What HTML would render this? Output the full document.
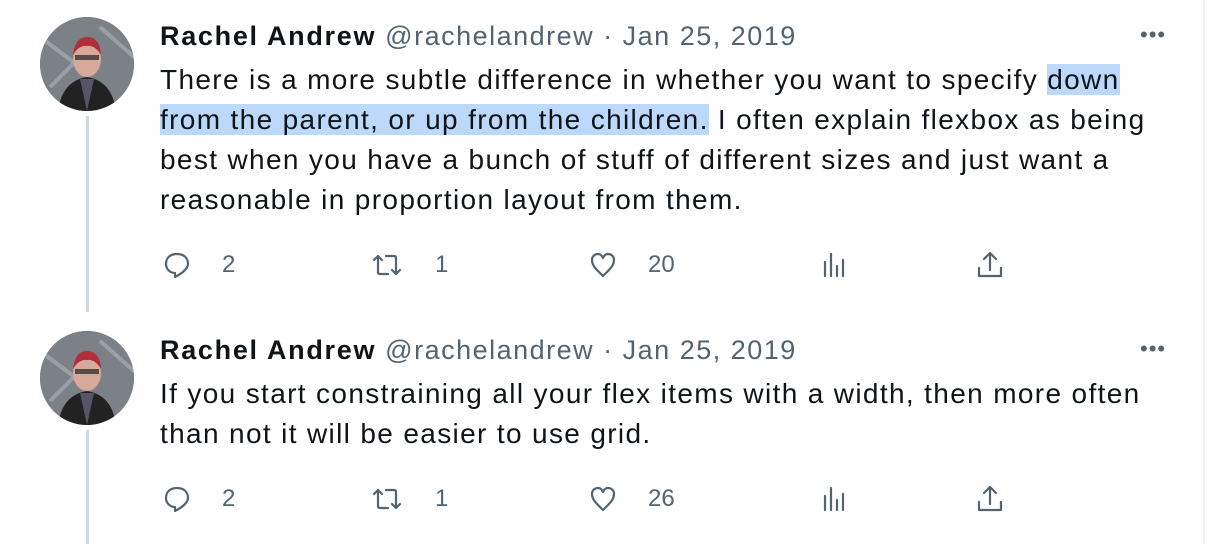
<!DOCTYPE html>
<html><head><meta charset="utf-8"><style>
*{margin:0;padding:0;box-sizing:border-box}
body{width:1208px;height:544px;background:#fff;position:relative;overflow:hidden;font-family:"Liberation Sans",Arial,sans-serif;color:#0f1419}
.border{position:absolute;left:1203px;top:0;width:2px;height:544px;background:#eff3f4}
.line{position:absolute;left:86px;width:3px;background:#cfd9de}
.av{position:absolute;left:40px;width:94px;height:94px;border-radius:50%;overflow:hidden;background:#6b7073}
.hdr{position:absolute;left:160px;font-size:27px;white-space:nowrap;letter-spacing:1.5px}
.hdr b{font-weight:bold;color:#0f1419;letter-spacing:1.7px}
.hdr span{color:#536471}
.txt{position:absolute;left:160px;font-size:28px;line-height:40px;white-space:nowrap;letter-spacing:1.35px}
.hl{background:#bcd8fb}
.dots{position:absolute;left:1140px;font-size:22px;color:#536471;letter-spacing:1px}
.act{position:absolute;height:32px;display:flex;align-items:center;color:#536471;font-size:24px}
.act svg{width:30px;height:30px;fill:none;stroke:#536471;stroke-width:2.2;stroke-linecap:round;stroke-linejoin:round}
</style></head><body>
<div class="border"></div>
<div class="line" style="top:116px;height:196px"></div>
<div class="line" style="top:430px;height:114px"></div>

<div class="av" style="top:17px">
<svg width="94" height="94" viewBox="0 0 94 94"><rect width="94" height="94" fill="#7b8186"/><path d="M0 20 L40 50 M60 10 L94 40 M10 70 L50 30" stroke="#9aa0a5" stroke-width="4"/><path d="M18 94 Q22 64 47 60 Q72 64 76 94Z" fill="#222"/><path d="M40 62 L47 94 L54 62Z" fill="#556"/><ellipse cx="47" cy="42" rx="14" ry="18" fill="#d6a99a"/><path d="M33 38 Q35 20 47 20 Q60 20 61 38 Q55 28 47 29 Q39 28 33 38Z" fill="#b0303a"/><rect x="35" y="38" width="24" height="5" fill="#222" opacity=".7"/></svg>
</div>
<div class="av" style="top:331px">
<svg width="94" height="94" viewBox="0 0 94 94"><rect width="94" height="94" fill="#7b8186"/><path d="M0 20 L40 50 M60 10 L94 40 M10 70 L50 30" stroke="#9aa0a5" stroke-width="4"/><path d="M18 94 Q22 64 47 60 Q72 64 76 94Z" fill="#222"/><path d="M40 62 L47 94 L54 62Z" fill="#556"/><ellipse cx="47" cy="42" rx="14" ry="18" fill="#d6a99a"/><path d="M33 38 Q35 20 47 20 Q60 20 61 38 Q55 28 47 29 Q39 28 33 38Z" fill="#b0303a"/><rect x="35" y="38" width="24" height="5" fill="#222" opacity=".7"/></svg>
</div>

<div class="hdr" style="top:21px"><b>Rachel Andrew</b> <span>@rachelandrew · Jan 25, 2019</span></div>
<div class="dots" style="top:22px">•••</div>
<div class="txt" style="top:60px">There is a more subtle difference in whether you want to specify <span class="hl">down</span></div>
<div class="txt" style="top:100px"><span class="hl">from the parent, or up from the children.</span> I often explain flexbox as being</div>
<div class="txt" style="top:140px">best when you have a bunch of stuff of different sizes and just want a</div>
<div class="txt" style="top:180px">reasonable in proportion layout from them.</div>

<div class="hdr" style="top:335px"><b>Rachel Andrew</b> <span>@rachelandrew · Jan 25, 2019</span></div>
<div class="dots" style="top:336px">•••</div>
<div class="txt" style="top:374px">If you start constraining all your flex items with a width, then more often</div>
<div class="txt" style="top:414px">than not it will be easier to use grid.</div>

<div class="act" style="left:162px;top:249px"><svg viewBox="0 0 30 30"><path d="M15 4 C8 4 4 8 4 14 C4 19 8 23 13 23 L13 27 C19 24 26 19 26 14 C26 8 22 4 15 4Z"/></svg><span style="margin-left:30px">2</span></div>
<div class="act" style="left:372px;top:249px"><svg viewBox="0 0 30 30"><path d="M6 6 L6 22 Q6 24 8 24 L16 24 M2 10 L6 6 L10 10 M24 24 L24 8 Q24 6 22 6 L14 6 M20 20 L24 24 L28 20"/></svg><span style="margin-left:33px">1</span></div>
<div class="act" style="left:588px;top:249px"><svg viewBox="0 0 30 30"><path d="M15 26 C9 20 4 16 4 10 C4 6 7 4 10 4 C13 4 14 6 15 8 C16 6 17 4 20 4 C23 4 26 6 26 10 C26 16 21 20 15 26Z"/></svg><span style="margin-left:30px">20</span></div>
<div class="act" style="left:820px;top:249px"><svg viewBox="0 0 30 30"><path d="M5 12 L5 26 M11 4 L11 26 M17 16 L17 26 M23 10 L23 26"/></svg></div>
<div class="act" style="left:975px;top:249px"><svg viewBox="0 0 30 30"><path d="M15 3 L15 20 M9 9 L15 3 L21 9 M4 18 L4 26 L26 26 L26 18"/></svg></div>

<div class="act" style="left:162px;top:483px"><svg viewBox="0 0 30 30"><path d="M15 4 C8 4 4 8 4 14 C4 19 8 23 13 23 L13 27 C19 24 26 19 26 14 C26 8 22 4 15 4Z"/></svg><span style="margin-left:30px">2</span></div>
<div class="act" style="left:372px;top:483px"><svg viewBox="0 0 30 30"><path d="M6 6 L6 22 Q6 24 8 24 L16 24 M2 10 L6 6 L10 10 M24 24 L24 8 Q24 6 22 6 L14 6 M20 20 L24 24 L28 20"/></svg><span style="margin-left:33px">1</span></div>
<div class="act" style="left:588px;top:483px"><svg viewBox="0 0 30 30"><path d="M15 26 C9 20 4 16 4 10 C4 6 7 4 10 4 C13 4 14 6 15 8 C16 6 17 4 20 4 C23 4 26 6 26 10 C26 16 21 20 15 26Z"/></svg><span style="margin-left:30px">26</span></div>
<div class="act" style="left:820px;top:483px"><svg viewBox="0 0 30 30"><path d="M5 12 L5 26 M11 4 L11 26 M17 16 L17 26 M23 10 L23 26"/></svg></div>
<div class="act" style="left:975px;top:483px"><svg viewBox="0 0 30 30"><path d="M15 3 L15 20 M9 9 L15 3 L21 9 M4 18 L4 26 L26 26 L26 18"/></svg></div>
</body></html>
